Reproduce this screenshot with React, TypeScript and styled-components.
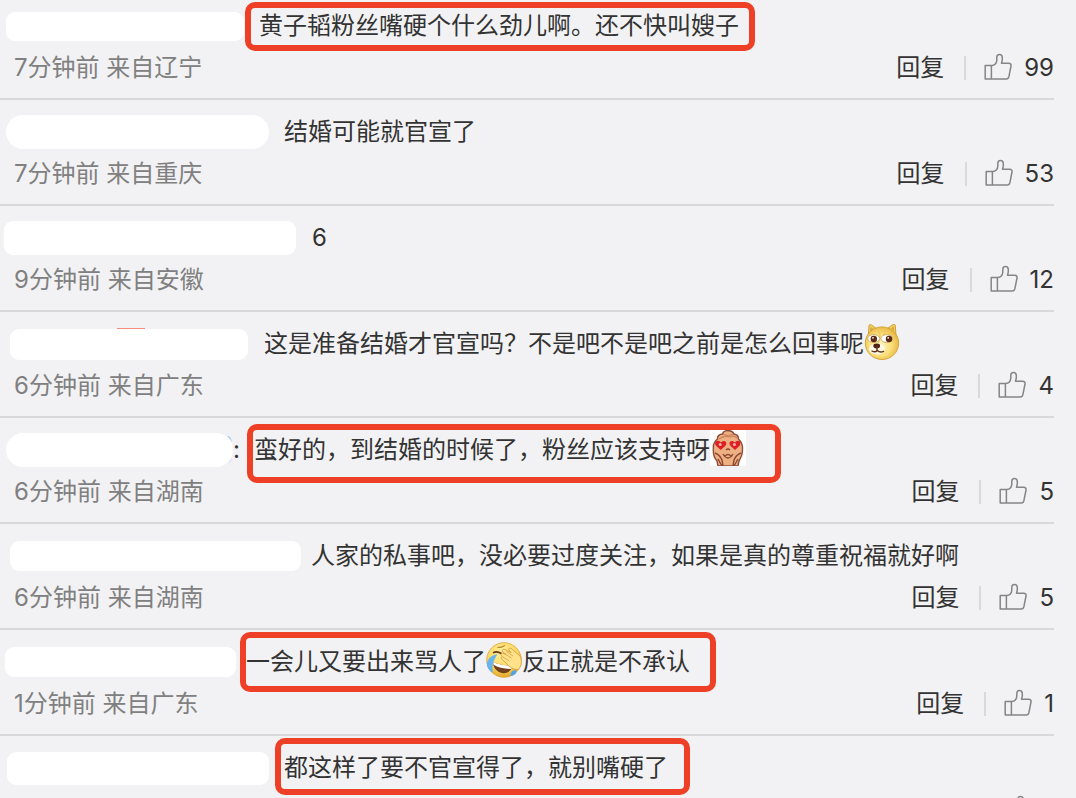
import React from "react";
import styled, { createGlobalStyle } from "styled-components";

const GlobalStyle = createGlobalStyle`
  * { box-sizing: border-box; }
  body {
    margin: 0;
    background: #f2f2f4;
    color: #333333;
    font-family: Inter, "Noto Sans CJK SC", sans-serif;
    font-size: 24px;
    font-weight: 400;
    line-height: 32px;
  }
`;

const Page = styled.main`
  height: 100vh;
  overflow: hidden;
  background: #f2f2f4;
`;

const List = styled.ul`
  list-style: none;
  margin: 0 22px 0 0;
  padding: 0;
`;

const Row = styled.li`
  padding: 6px 0 14px;
  border-bottom: 2px solid #d9d9db;

  &:first-child {
    padding-top: 0;
  }
`;

const ContentLine = styled.div`
  display: flex;
  align-items: center;
  height: 52px;
  white-space: nowrap;
`;

const NameMask = styled.span<{ $indent: number; $width: number; $height: number; $round?: boolean }>`
  position: relative;
  flex: none;
  width: ${(p) => p.$width}px;
  height: ${(p) => p.$height}px;
  margin-left: ${(p) => p.$indent}px;
  border-radius: ${(p) => (p.$round ? 17 : 9)}px;
  background: #ffffff;
`;

const RedSliver = styled.span`
  position: absolute;
  top: -1px;
  left: 107px;
  width: 28px;
  height: 1px;
  background: #f58b78;
`;

const BlueSliver = styled.svg`
  position: absolute;
  top: 0;
  right: 0;
`;

const Colon = styled.span`
  width: 8px;
`;

const Message = styled.p<{ $gap: number }>`
  position: relative;
  display: flex;
  align-items: center;
  height: 52px;
  margin: 0 0 0 ${(p) => p.$gap}px;
`;

const Frame = styled.span<{ $inset: string }>`
  position: absolute;
  inset: ${(p) => p.$inset};
  border: 6px solid #ee4027;
  border-radius: 10px;
  pointer-events: none;
`;

const Emoji = styled.svg`
  flex: none;
  width: 36px;
  height: 36px;
  margin-bottom: 4px;
`;

const MetaLine = styled.div`
  display: flex;
  align-items: center;
  justify-content: space-between;
  height: 32px;
`;

const Source = styled.span`
  padding-left: 14px;
  color: #808080;
`;

const Actions = styled.div`
  display: flex;
  align-items: center;
  margin-left: auto;
`;

const PlainButton = styled.button`
  display: flex;
  align-items: center;
  gap: 12px;
  padding: 0;
  border: 0;
  background: none;
  color: inherit;
  font: inherit;
  cursor: pointer;
`;

const Count = styled.span`
  min-width: 9px;
`;

const Divider = styled.span`
  width: 2px;
  height: 24px;
  margin: 0 18px 0 20px;
  background: #d9d9db;
`;

const ThumbSvg = styled.svg`
  width: 28px;
  height: 28px;
  margin-bottom: 2px;
`;

const Thumb = () => (
  <ThumbSvg viewBox="0 0 28 28" fill="none" stroke="#858585" strokeWidth="1.5" strokeLinejoin="round" aria-hidden="true">
    <path d="M1.2 12.6H7.6C10.6 12.2 12.6 9.8 12.8 7.2V4.4C12.8 2.6 13.8 1.5 15.4 1.5C17.2 1.5 18.3 2.7 18.3 4.6V6.8C18.3 8.3 17.5 9.4 17.5 10.2H24.6C26.5 10.2 27.3 11.3 27 13L24.9 23.7C24.5 25.4 23.9 26 22.4 26H1.2Z" />
    <path d="M7.4 12.6V26" />
  </ThumbSvg>
);

const Doge = () => (
  <Emoji viewBox="0 0 36 36" role="img" aria-label="doge">
    <defs>
      <radialGradient id="dogeFace" cx="45%" cy="55%" r="60%">
        <stop offset="0" stopColor="#fff3c4" />
        <stop offset="0.55" stopColor="#fbe07c" />
        <stop offset="1" stopColor="#e6b03a" />
      </radialGradient>
    </defs>
    <path d="M4.4 11L5 1.5C5.4 .2 6.6 .3 7.5 1L13 5ZM24 4L29 .5C30.5-.2 31.2.5 31.3 2L32 11Z" fill="#f3cf62" stroke="#c99a2b" strokeWidth=".9" />
    <path d="M6 7L6.5 3L10 5.2ZM27 4.4L29.8 2.2L30.2 7Z" fill="#d9a548" />
    <ellipse cx="18" cy="19.2" rx="16.7" ry="16.3" fill="url(#dogeFace)" stroke="#d3a12f" strokeWidth=".9" />
    <path d="M14 6Q18 12 14 19M22 6Q18 12 20 18" stroke="#efc967" strokeWidth="1.5" fill="none" />
    <ellipse cx="9.7" cy="14.6" rx="6" ry="3.9" fill="#fff" stroke="#b98b3c" strokeWidth=".6" />
    <ellipse cx="22.8" cy="14.6" rx="5.9" ry="3.9" fill="#fff" stroke="#b98b3c" strokeWidth=".6" />
    <circle cx="9.8" cy="15" r="3.2" fill="#5b2813" />
    <circle cx="25" cy="15" r="3.2" fill="#5b2813" />
    <circle cx="9" cy="13.8" r=".9" fill="#fff" />
    <circle cx="24.2" cy="13.8" r=".9" fill="#fff" />
    <ellipse cx="13" cy="25" rx="8" ry="5.5" fill="#fff9e5" />
    <ellipse cx="12.7" cy="22" rx="3.4" ry="2.4" fill="#4f2313" />
    <path d="M13 23V26.5M8 27Q11 28.8 13.4 26.5Q16 29 19.5 27.3" fill="none" stroke="#63301a" strokeWidth="1.4" strokeLinecap="round" />
  </Emoji>
);

const HeartEyes = () => (
  <Emoji viewBox="0 0 36 36" role="img" aria-label="heart eyes">
    <rect width="36" height="36" fill="#fff" />
    <path d="M8 36L7 31C4 28 3 23 3.4 18C3 14 5 11 7.5 9C7 6 10 4 12.5 4C13.5 1 16 .4 18 .8C21 .3 23 2 24 4C27 4.5 28.5 6.5 28.5 9C31.5 12 33 16 32.4 20C33 25 30 29 29 31L28 36Z" fill="#ecb083" stroke="#8e4d38" strokeWidth="1.4" />
    <path d="M9 9Q14 5 20 7Q24 5 27 8M13 4Q18 7 23 4" fill="none" stroke="#cc825d" strokeWidth="1.2" />
    <path d="M10.8 20L5.6 15.2Q4.2 12 7 11Q9.7 10.4 10.8 12.6Q12.6 10.2 15.2 11.3Q17.2 13 15.4 15.8ZM25 20L20.4 15.8Q18.4 13 20.6 11.3Q23 10.2 25 12.6Q26.4 10.2 29 11.1Q31.4 12.6 29.8 15.6Z" fill="#df1f24" />
    <circle cx="10.2" cy="14.5" r="1.5" fill="#ffb5a8" />
    <circle cx="24.4" cy="14.5" r="1.5" fill="#ffb5a8" />
    <path d="M16 20Q18 18 20 20M13 24Q18 32 23 24M15 26Q18 23 21 26M5 23Q10 25 12 30L13 36M31 23Q26 25 24 30L23 36M8 29L12 36M28 29L24 36" fill="none" stroke="#8e4632" strokeWidth="1.4" />
  </Emoji>
);

const LaughCry = () => (
  <Emoji viewBox="0 0 36 36" role="img" aria-label="laugh cry">
    <defs>
      <radialGradient id="laughFace" cx="45%" cy="30%" r="70%">
        <stop offset="0" stopColor="#fff0a0" />
        <stop offset="0.65" stopColor="#fbd75a" />
        <stop offset="1" stopColor="#e4a62c" />
      </radialGradient>
    </defs>
    <circle cx="18" cy="18" r="17.3" fill="url(#laughFace)" stroke="#dca33a" strokeWidth=".8" />
    <path d="M12 5.3Q15.5 5.8 18.5 3.6" fill="none" stroke="#b5772b" strokeWidth="1.1" strokeLinecap="round" />
    <path d="M7.6 10.5Q11 8.7 15.4 11.5" fill="none" stroke="#693919" strokeWidth="1.7" strokeLinecap="round" />
    <path d="M7 20Q15 23.5 26.5 24C25 29 21 32 16 31C11 30 7 25.5 7 20Z" fill="#70401e" />
    <path d="M7 20Q15 23.5 26.5 24L25.3 27Q14 26.7 7.6 22.8Z" fill="#fff" />
    <path d="M11.5 12.3C5 13 0 18 1 23.8C2 27.5 4.4 29.8 7 30.5C5.6 24.5 7.2 18.4 11.5 12.3Z" fill="#68b4ef" />
    <path d="M24.5 34C24.5 30 27 28 30.4 28.4C30.8 31 29 33.3 24.5 34Z" fill="#52a2e6" />
    <path d="M16.3 8.2Q17 6.7 19 7.5L25 10.6L22.4 7.2Q23 5.5 25 6.3L34 14C36.4 19 35.7 24 32.3 27.5C28 27.8 23.3 25.4 20.8 21.8L15.2 16.6Q14.6 14.8 16.5 14.9L14.8 12.7Q14.8 11 16.7 11.2L20 12.5L16.7 9.8Z" fill="#ffe28a" stroke="#d39a3b" strokeWidth=".8" />
    <path d="M19 12L25.5 16M17 15L23.5 19.3M20.5 9.5L27 14" stroke="#d8a144" strokeWidth=".8" />
  </Emoji>
);

interface Comment {
  mask: [indent: number, width: number, height: number];
  round?: boolean;
  sliver?: "red" | "blue";
  gap: number;
  text: React.ReactNode;
  frame?: string;
  source?: string;
  likes?: number;
}

const comments: Comment[] = [
  { mask: [6, 238, 29], gap: 15, text: "黄子韬粉丝嘴硬个什么劲儿啊。还不快叫嫂子", frame: "2px -16px 1px -14px", source: "7分钟前 来自辽宁", likes: 99 },
  { mask: [6, 263, 34], round: true, gap: 15, text: "结婚可能就官宣了", source: "7分钟前 来自重庆", likes: 53 },
  { mask: [4, 292, 34], gap: 16, text: "6", source: "9分钟前 来自安徽", likes: 12 },
  { mask: [10, 238, 31], sliver: "red", gap: 16, text: <>这是准备结婚才官宣吗？不是吧不是吧之前是怎么回事呢<Doge /></>, source: "6分钟前 来自广东", likes: 4 },
  { mask: [6, 227, 34], round: true, sliver: "blue", gap: 13, text: <>蛮好的，到结婚的时候了，粉丝应该支持呀<HeartEyes /></>, frame: "0 -35px -7px -7px", source: "6分钟前 来自湖南", likes: 5 },
  { mask: [10, 291, 30], gap: 10, text: "人家的私事吧，没必要过度关注，如果是真的尊重祝福就好啊", source: "6分钟前 来自湖南", likes: 5 },
  { mask: [5, 231, 30], gap: 10, text: <>一会儿又要出来骂人了<LaughCry />反正就是不承认</>, frame: "-4px -26px -4px -6px", source: "1分钟前 来自广东", likes: 1 },
  { mask: [7, 262, 33], gap: 15, text: "都这样了要不官宣得了，就别嘴硬了", frame: "-4px -22px -1px -9px" },
];

const CommentRow = ({ mask, round, sliver, gap, text, frame, source, likes }: Comment) => (
  <Row>
    <ContentLine>
      <NameMask $indent={mask[0]} $width={mask[1]} $height={mask[2]} $round={round}>
        {sliver === "red" && <RedSliver />}
        {sliver === "blue" && (
          <BlueSliver width="6" height="34" viewBox="0 0 6 34" fill="#8fbef5" aria-hidden="true">
            <path d="M0 3Q4 3 5 9Q3 5 0 3ZM5 25Q4 29 1 30Q4 28 5 25Z" />
          </BlueSliver>
        )}
      </NameMask>
      {sliver === "blue" && <Colon>:</Colon>}
      <Message $gap={gap}>
        {text}
        {frame && <Frame $inset={frame} />}
      </Message>
    </ContentLine>
    <MetaLine>
      {source && <Source>{source}</Source>}
      <Actions>
        {source && (
          <>
            <PlainButton type="button">回复</PlainButton>
            <Divider />
          </>
        )}
        <PlainButton type="button" aria-label="赞">
          <Thumb />
          <Count>{likes}</Count>
        </PlainButton>
      </Actions>
    </MetaLine>
  </Row>
);

export default function App() {
  return (
    <Page>
      <GlobalStyle />
      <List>
        {comments.map((comment, i) => (
          <CommentRow key={i} {...comment} />
        ))}
      </List>
    </Page>
  );
}
